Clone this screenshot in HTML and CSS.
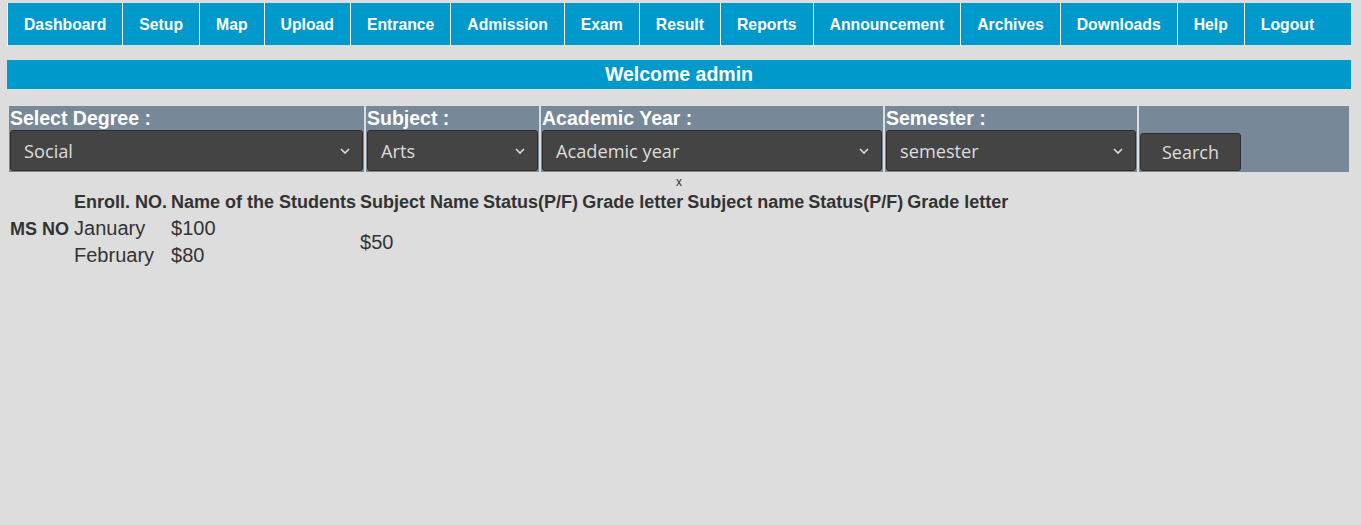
FILE: index.html
```html
<!DOCTYPE html>
<html>
<head>
<meta charset="utf-8">
<link rel="stylesheet" href="styles.css">
</head>
<body>
<nav class="nav">
  <ul class="menu">
    <li><a>Dashboard</a></li>
    <li><a>Setup</a></li>
    <li><a>Map</a></li>
    <li><a>Upload</a></li>
    <li><a>Entrance</a></li>
    <li><a>Admission</a></li>
    <li><a>Exam</a></li>
    <li><a>Result</a></li>
    <li><a>Reports</a></li>
    <li><a>Announcement</a></li>
    <li><a>Archives</a></li>
    <li><a>Downloads</a></li>
    <li><a>Help</a></li>
    <li><a>Logout</a></li>
  </ul>
</nav>
<div class="welcome">Welcome admin</div>
<table class="filters">
  <tr>
    <td class="f-degree"><div class="lbl">Select Degree :</div><div class="sel"><span>Social</span><svg viewBox="0 0 10 6" class="chev"><path d="M1 1 L5 5 L9 1" /></svg></div></td>
    <td class="f-subject"><div class="lbl">Subject :</div><div class="sel"><span>Arts</span><svg viewBox="0 0 10 6" class="chev"><path d="M1 1 L5 5 L9 1" /></svg></div></td>
    <td class="f-year"><div class="lbl">Academic Year :</div><div class="sel"><span>Academic year</span><svg viewBox="0 0 10 6" class="chev"><path d="M1 1 L5 5 L9 1" /></svg></div></td>
    <td class="f-sem"><div class="lbl">Semester :</div><div class="sel"><span>semester</span><svg viewBox="0 0 10 6" class="chev"><path d="M1 1 L5 5 L9 1" /></svg></div></td>
    <td class="f-btn"><button class="btn">Search</button></td>
  </tr>
</table>
<div class="close">x</div>
<table class="results">
  <tr>
    <th rowspan="3" class="msno">MS NO</th>
    <th>Enroll. NO.</th>
    <th>Name of the Students</th>
    <th>Subject Name</th>
    <th>Status(P/F)</th>
    <th>Grade letter</th>
    <th>Subject name</th>
    <th>Status(P/F)</th>
    <th>Grade letter</th>
  </tr>
  <tr>
    <td>January</td>
    <td>$100</td>
    <td rowspan="2">$50</td>
  </tr>
  <tr>
    <td>February</td>
    <td>$80</td>
  </tr>
</table>
</body>
</html>
```
FILE: styles.css
```css
html, body {
  margin: 0;
  padding: 0;
  background: #dddddd;
  font-family: "Liberation Sans", Arial, sans-serif;
}
body {
  padding: 3px 10px 0 7px;
}
.nav {
  background: #0099cc;
  height: 42px;
}
.menu {
  list-style: none;
  margin: 0;
  padding: 0;
  display: flex;
  height: 42px;
}
.menu li {
  border-left: 1px solid #ffffff;
  height: 43px;
}
.menu a {
  display: block;
  padding: 0 16px;
  line-height: 43px;
  color: #ffffff;
  font-weight: bold;
  font-size: 15.75px;
}
.welcome {
  margin-top: 15px;
  background: #0099cc;
  color: #ffffff;
  font-weight: bold;
  font-size: 19.5px;
  height: 29px;
  line-height: 29px;
  text-align: center;
}
.filters {
  margin-top: 15px;
  width: 1344px;
  border-spacing: 2px;
  table-layout: fixed;
}
.filters td {
  background: #778899;
  padding: 1px;
  vertical-align: bottom;
}
.f-degree { width: 353px; }
.f-subject { width: 171px; }
.f-year { width: 340px; }
.f-sem { width: 250px; }
.lbl {
  color: #ffffff;
  font-weight: bold;
  font-size: 19.5px;
  line-height: 23px;
}
.sel {
  display: flex;
  align-items: center;
  justify-content: space-between;
  box-sizing: border-box;
  height: 41px;
  background: #444444;
  border: 1px solid #2e2e2e;
  border-radius: 3px;
  padding: 0 12px 0 13px;
  color: #dddddd;
  font-family: "Open Sans", "Noto Sans", sans-serif;
  font-size: 18.2px;
}
.chev {
  width: 10px;
  height: 6px;
  fill: none;
  stroke: #dddddd;
  stroke-width: 1.6;
}
.btn {
  display: block;
  box-sizing: border-box;
  width: 101px;
  height: 38px;
  background: #444444;
  border: 1px solid #2e2e2e;
  border-radius: 3px;
  color: #dddddd;
  font-family: "Open Sans", "Noto Sans", sans-serif;
  font-size: 18px;
  padding: 0;
}
.close {
  text-align: center;
  font-size: 12px;
  color: #333333;
  line-height: 14px;
  margin-top: 1px;
}
.results {
  color: #333333;
  border-spacing: 2px;
}
.results th {
  font-size: 18px;
  padding: 1px;
  text-align: left;
  white-space: nowrap;
}
.results th.msno {
  vertical-align: middle;
  padding-right: 2px;
}
.results td {
  font-size: 20px;
  padding: 1px;
  text-align: left;
}
```
